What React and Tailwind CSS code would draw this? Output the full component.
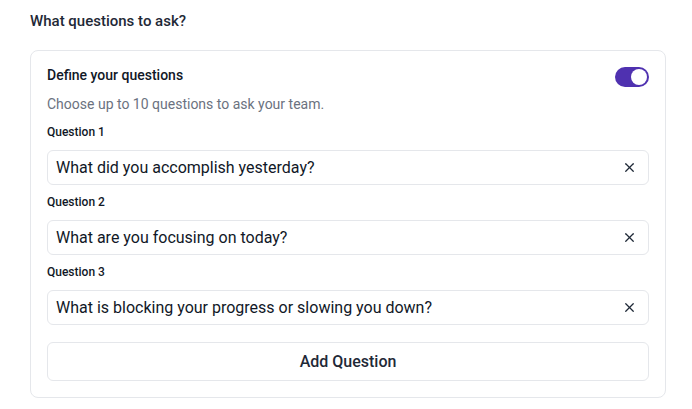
import React from "react";
import { X } from "lucide-react";

const questions = [
  "What did you accomplish yesterday?",
  "What are you focusing on today?",
  "What is blocking your progress or slowing you down?",
];

export default function App() {
  return (
    <div
      className="w-[692px] h-[409px] bg-white pl-[30px] pr-[26px] pt-[11px]"
      style={{ fontFamily: "Roboto, 'Noto Sans', sans-serif" }}
    >
      <h2 className="text-[15px] leading-5 font-medium text-[#1f2937]">What questions to ask?</h2>
      <div className="mt-[19px] border border-[#e5e7eb] rounded-[8px] px-4 pt-[14px] pb-4">
        <div className="flex items-center justify-between h-5">
          <span className="text-[14px] font-medium text-[#111827]">Define your questions</span>
          <div className="w-[34px] h-5 rounded-full bg-[#4f31b0] flex items-center justify-end pr-[2px] mt-1">
            <div className="w-4 h-4 rounded-full bg-white" />
          </div>
        </div>
        <p className="mt-[9px] text-[14px] leading-5 text-[#6b7280]">Choose up to 10 questions to ask your team.</p>
        <div className="mt-[10px] flex flex-col gap-[9px]">
          {questions.map((q, i) => (
            <div key={i}>
              <div className="text-[12px] leading-4 font-medium text-[#111827]">Question {i + 1}</div>
              <div className="mt-[10px] h-[35px] border border-[#e5e7eb] rounded-[6px] flex items-center justify-between pl-[8px] pr-[11px]">
                <span className="text-[16px] text-[#111827]">{q}</span>
                <X size={15} strokeWidth={2} className="text-[#1f2937]" />
              </div>
            </div>
          ))}
        </div>
        <button className="mt-[17px] w-full h-[39px] border border-[#e5e7eb] rounded-[6px] text-[16px] font-medium text-[#1f2937] bg-white">
          Add Question
        </button>
      </div>
    </div>
  );
}
